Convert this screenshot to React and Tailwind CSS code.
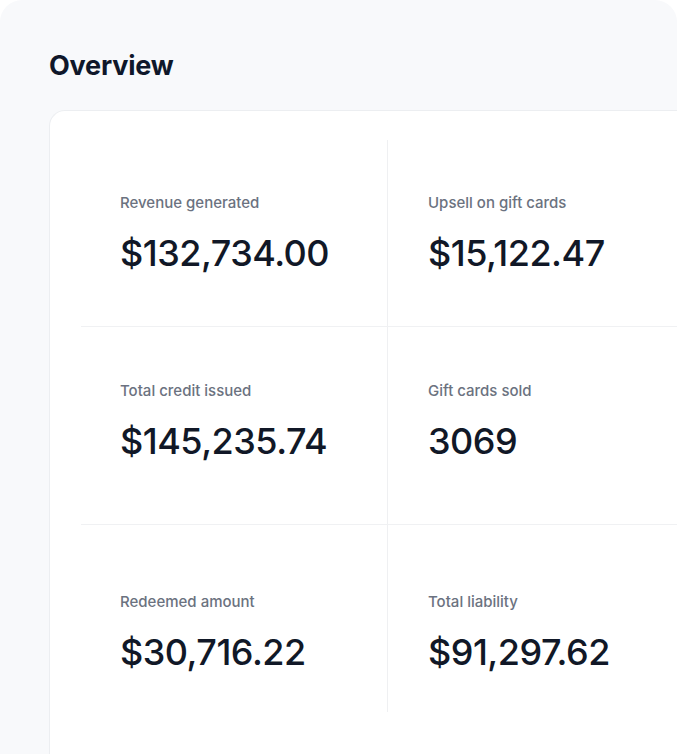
export default function App() {
  const rows = [
    { h: "h-[187px]", pt: "pt-[53px]", b: true, cells: [["Revenue generated", "$132,734.00"], ["Upsell on gift cards", "$15,122.47"]] },
    { h: "h-[198px]", pt: "pt-[54px]", b: true, cells: [["Total credit issued", "$145,235.74"], ["Gift cards sold", "3069"]] },
    { h: "h-[187px]", pt: "pt-[67px]", b: false, cells: [["Redeemed amount", "$30,716.22"], ["Total liability", "$91,297.62"]] },
  ];
  return (
    <div className="w-[677px] h-[754px] overflow-hidden bg-white" style={{ fontFamily: "Inter, 'Noto Sans', sans-serif" }}>
      <div className="h-full bg-[#f8f9fb] rounded-t-[22px] pt-[50px] pl-[49px]">
        <h1 className="text-[27px] leading-[32px] font-bold text-[#0f172a] tracking-[-0.2px]">Overview</h1>
        <div className="mt-[28px] h-[700px] bg-white rounded-tl-[16px] border-t border-l border-[#eceef1] pl-[31px] pt-[29px]">
          {rows.map((r, i) => (
            <div key={i} className={`flex ${r.h} ${r.b ? "border-b border-[#f0f1f3]" : ""}`}>
              {r.cells.map(([l, v], j) => (
                <div key={j} className={`${j === 0 ? "w-[307px] pl-[39px] border-r border-[#eff0f2]" : "flex-1 pl-[40px]"} ${r.pt}`}>
                  <div className="text-[15px] leading-[20px] text-[#6b7280] font-medium">{l}</div>
                  <div className="mt-[18px] text-[36px] leading-[44px] font-medium text-[#111827] tracking-[-0.5px]">{v}</div>
                </div>
              ))}
            </div>
          ))}
        </div>
      </div>
    </div>
  );
}
